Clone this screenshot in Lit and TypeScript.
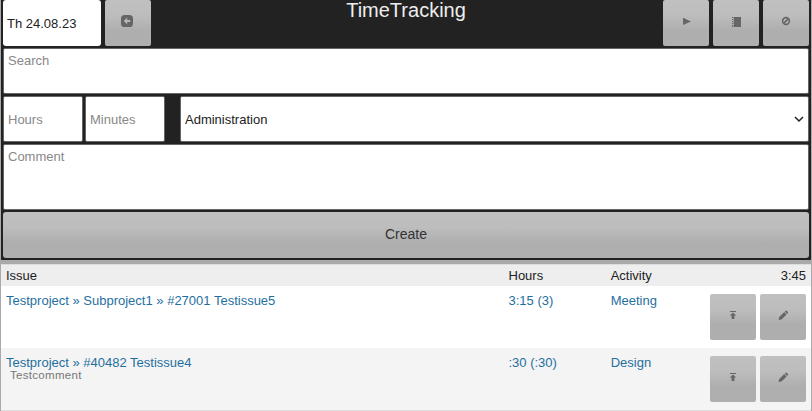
import { LitElement, html, svg, css } from "lit";
import { customElement, property } from "lit/decorators.js";

const glyphs: Record<string, unknown> = {
  back: svg`<path fill-rule="evenodd" d="M3.6 0H8.4Q12 0 12 3.6V8.4Q12 12 8.4 12H3.6Q0 12 0 8.4V3.6Q0 0 3.6 0ZM6.2 2.6L2.8 6L6.2 9.4V7H9.2V5H6.2Z"/>`,
  play: svg`<path d="M3 2.8L11 6.4L3 10Z"/>`,
  book: svg`<path d="M3.8 2H11V12H3.8Z"/><path d="M2 2.5H3.3M2 4.5H3.3M2 6.5H3.3M2 8.5H3.3M2 10.5H3.3M2 11.8H3.3" stroke="#666" stroke-width="1"/>`,
  ban: svg`<circle cx="6" cy="6" r="3.4" fill="none" stroke="#666" stroke-width="1.6"/><path d="M3.6 8.4L8.4 3.6" stroke="#666" stroke-width="1.5"/>`,
  upload: svg`<path d="M3 2H9V3H3ZM6 3.5L9.2 6.6H7.4V10H4.6V6.6H2.8Z"/>`,
  pencil: svg`<path d="M1.6 11L2.1 8.2L7.2 3.1L9.6 5.5L4.5 10.6ZM7.8 2.5L8.6 1.8Q9.3 1.3 9.9 1.9L10.8 2.8Q11.3 3.5 10.8 4.2L10.1 4.9Z"/>`,
};

@customElement("icon-button")
class IconButton extends LitElement {
  @property() icon = "";
  static styles = css`
    :host { display: block; width: 46px; height: 46px; flex: none; }
    button {
      display: flex; align-items: center; justify-content: center;
      width: 46px; height: 46px; padding: 0 0 4px; border: 0; border-radius: 2px;
      background: linear-gradient(#c0c0c0, #bdbdbd 33%, #aeaeae 67%, #afafaf);
    }
    :host([icon="back"]) button { padding-right: 2px; }
    svg { display: block; width: 12px; height: 12px; fill: #666; }
  `;
  render() {
    return html`<button aria-label=${this.icon}><svg viewBox="0 0 12 12">${glyphs[this.icon]}</svg></button>`;
  }
}

const entries = [
  { issue: "Testproject » Subproject1 » #27001 Testissue5", hours: "3:15 (3)", activity: "Meeting", comment: "" },
  { issue: "Testproject » #40482 Testissue4", hours: ":30 (:30)", activity: "Design", comment: "Testcomment" },
];

@customElement("app-root")
class AppRoot extends LitElement {
  static styles = css`
    :host {
      display: block; box-sizing: border-box; height: 411px; padding: 0 1px; overflow: hidden;
      background: #aaa; color: #222; font: 13px/16px "Liberation Sans", Arial, sans-serif;
    }
    * { box-sizing: border-box; }
    .panel { display: flex; flex-direction: column; gap: 2px; height: 260px; padding: 0 2px 2px; background: #222; }
    .bar { display: grid; grid-template-columns: 1fr auto 1fr; height: 46px; }
    .group { display: flex; gap: 4px; }
    .end { justify-content: flex-end; }
    .date { width: 98px; height: 46px; padding: 16px 4px 0; border-radius: 3px; background: #fff; }
    h1 { margin: -1px 0 0; color: #eee; font-size: 20px; font-weight: 400; line-height: 22px; }
    input, textarea, select {
      display: block; width: 100%; height: 46px; margin: 0; padding: 0 4px; border: 1px solid #666;
      border-radius: 2px; outline: 0; background: #fff; color: #222; font: inherit; resize: none;
    }
    ::placeholder { color: #888; opacity: 1; }
    .search { padding-top: 4px; }
    .comment { height: 66px; padding-top: 4px; }
    .fields { display: flex; height: 46px; }
    .num { width: 80px; margin-right: 2px; flex: none; }
    .pick { position: relative; flex: 1; margin-left: 13px; }
    select { appearance: none; padding-top: 2px; }
    .caret { position: absolute; right: 5px; top: 18px; width: 10px; height: 10px; fill: none; stroke: #222; stroke-width: 1.5; }
    .create {
      height: 46px; padding: 0 0 2px; border: 0; border-radius: 3px; color: #333;
      font: 14px "Liberation Sans", Arial, sans-serif;
      background: linear-gradient(#c0c0c0, #bdbdbd 33%, #aeaeae 67%, #afafaf);
    }
    .list { margin-top: 4px; border: solid #ddd; border-width: 1px 0; background: #fff; }
    .row { display: grid; grid-template-columns: 502.5px 102.2px 1fr auto; height: 62px; padding: 7px 5px 0; color: #1f6f9f; }
    .row:last-child { background: #f4f4f4; }
    .head { height: 21px; padding-top: 3px; background: #eee; color: #222; }
    .note { margin: -3px 0 0 4px; color: #777; font-size: 11.5px; line-height: 14px; letter-spacing: 0.3px; }
    .tools { display: flex; gap: 4px; padding-top: 1px; }
  `;
  render() {
    return html`
      <div class="panel">
        <div class="bar">
          <div class="group"><div class="date">Th 24.08.23</div><icon-button icon="back"></icon-button></div>
          <h1>TimeTracking</h1>
          <div class="group end">
            <icon-button icon="play"></icon-button><icon-button icon="book"></icon-button><icon-button icon="ban"></icon-button>
          </div>
        </div>
        <textarea class="search" placeholder="Search"></textarea>
        <div class="fields">
          <input class="num" placeholder="Hours" /><input class="num" placeholder="Minutes" />
          <div class="pick">
            <select><option>Administration</option></select>
            <svg class="caret" viewBox="0 0 10 10"><path d="M1 3L5 7L9 3" /></svg>
          </div>
        </div>
        <textarea class="comment" placeholder="Comment"></textarea>
        <button class="create">Create</button>
      </div>
      <div class="list">
        <div class="row head"><span>Issue</span><span>Hours</span><span>Activity</span><span>3:45</span></div>
        ${entries.map((e) => html`
          <div class="row">
            <div>${e.issue}${e.comment ? html`<div class="note">${e.comment}</div>` : ""}</div>
            <span>${e.hours}</span><span>${e.activity}</span>
            <div class="tools"><icon-button icon="upload"></icon-button><icon-button icon="pencil"></icon-button></div>
          </div>`)}
      </div>`;
  }
}
